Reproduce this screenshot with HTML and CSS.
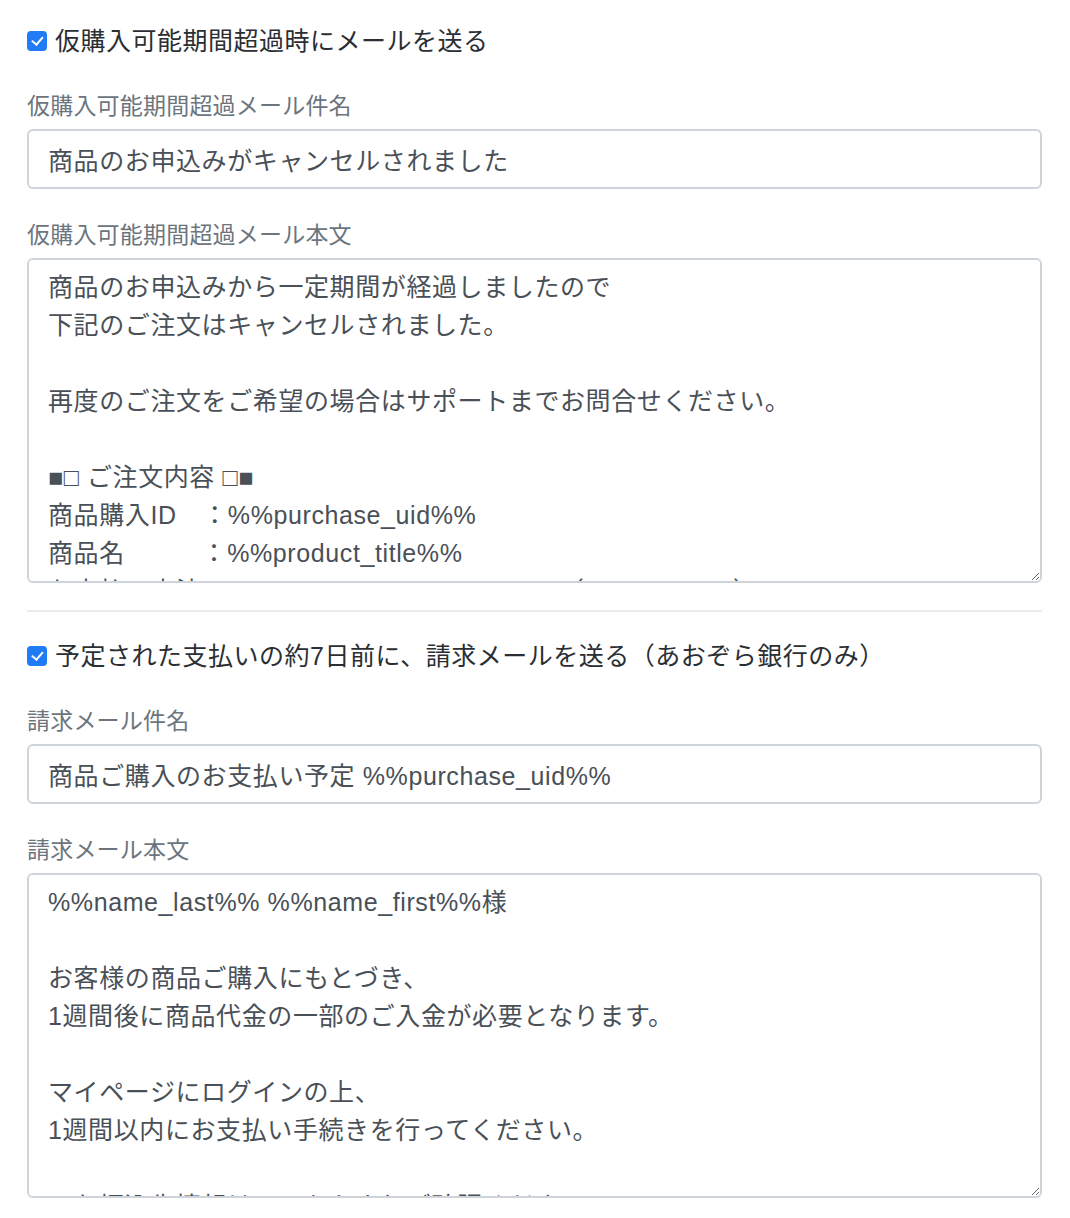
FILE: index.html
```html
<!DOCTYPE html>
<html lang="ja">
<head>
<meta charset="utf-8">
<link rel="stylesheet" href="styles.css">
</head>
<body>
<div class="page">
  <div class="check-row">
    <input type="checkbox" class="check" id="c1" checked>
    <label for="c1" class="check-label">仮購入可能期間超過時にメールを送る</label>
  </div>
  <div class="group">
    <label class="field-label">仮購入可能期間超過メール件名</label>
    <input type="text" class="control" value="商品のお申込みがキャンセルされました">
  </div>
  <div class="group last">
    <label class="field-label">仮購入可能期間超過メール本文</label>
    <textarea class="control area">商品のお申込みから一定期間が経過しましたので
下記のご注文はキャンセルされました。

再度のご注文をご希望の場合はサポートまでお問合せください。

■□ ご注文内容 □■
商品購入ID　：%%purchase_uid%%
商品名　　　：%%product_title%%
お支払い方法：%%payment_method%%　　（%%price%%）</textarea>
  </div>
  <hr class="divider">
  <div class="check-row">
    <input type="checkbox" class="check" id="c2" checked>
    <label for="c2" class="check-label">予定された支払いの約7日前に、請求メールを送る（あおぞら銀行のみ）</label>
  </div>
  <div class="group">
    <label class="field-label">請求メール件名</label>
    <input type="text" class="control" value="商品ご購入のお支払い予定 %%purchase_uid%%">
  </div>
  <div class="group last">
    <label class="field-label">請求メール本文</label>
    <textarea class="control area">%%name_last%% %%name_first%%様

お客様の商品ご購入にもとづき、
1週間後に商品代金の一部のご入金が必要となります。

マイページにログインの上、
1週間以内にお支払い手続きを行ってください。

・お振込先情報は、こちらよりご確認ください。</textarea>
  </div>
</div>
</body>
</html>
```
FILE: styles.css
```css
html, body {
  margin: 0;
  padding: 0;
  background: #ffffff;
}

body {
  font-family: "Liberation Sans", "Noto Sans CJK JP", sans-serif;
  font-size: 25px;
  color: #212529;
}

.page {
  padding: 22px 28px 0 27px;
}

.check-row {
  display: flex;
  align-items: center;
  height: 38px;
  margin-bottom: 27px;
}

.check {
  -webkit-appearance: none;
  appearance: none;
  position: relative;
  box-sizing: border-box;
  width: 20px;
  height: 20px;
  margin: 0 8px 0 0;
  border-radius: 4px;
  background: #1f7bf6;
  flex: none;
}

.check::after {
  content: "";
  position: absolute;
  left: 6.5px;
  top: 3px;
  width: 4.5px;
  height: 9px;
  border-right: 2.5px solid #ffffff;
  border-bottom: 2.5px solid #ffffff;
  transform: rotate(40deg);
}

.check-label {
  font-size: 25px;
  line-height: 38px;
  letter-spacing: 0.5px;
  color: #2b2f33;
}

.group {
  display: flex;
  flex-direction: column;
  margin-bottom: 27px;
}

.group.last {
  margin-bottom: 0;
}

.field-label {
  font-size: 23px;
  line-height: 34px;
  padding-top: 2px;
  height: 34px;
  box-sizing: border-box;
  letter-spacing: 0.2px;
  color: #6c757d;
  margin-bottom: 8px;
}

.control {
  display: block;
  box-sizing: border-box;
  width: 100%;
  margin: 0;
  height: 60px;
  padding: 9px 19px;
  border: 2px solid #ced4da;
  border-radius: 6px;
  font-family: "Liberation Sans", "Noto Sans CJK JP", sans-serif;
  font-size: 25px;
  line-height: 38px;
  letter-spacing: 0.6px;
  color: #495057;
  background: #ffffff;
  outline: none;
}

.area {
  height: 325px;
  padding-top: 8px;
  resize: vertical;
  overflow: auto;
  scrollbar-width: none;
  white-space: pre-wrap;
}

.area::-webkit-scrollbar {
  display: none;
}

.divider {
  border: 0;
  border-top: 2px solid #ebebeb;
  margin: 27px 0 25px 0;
  height: 0;
}
```
